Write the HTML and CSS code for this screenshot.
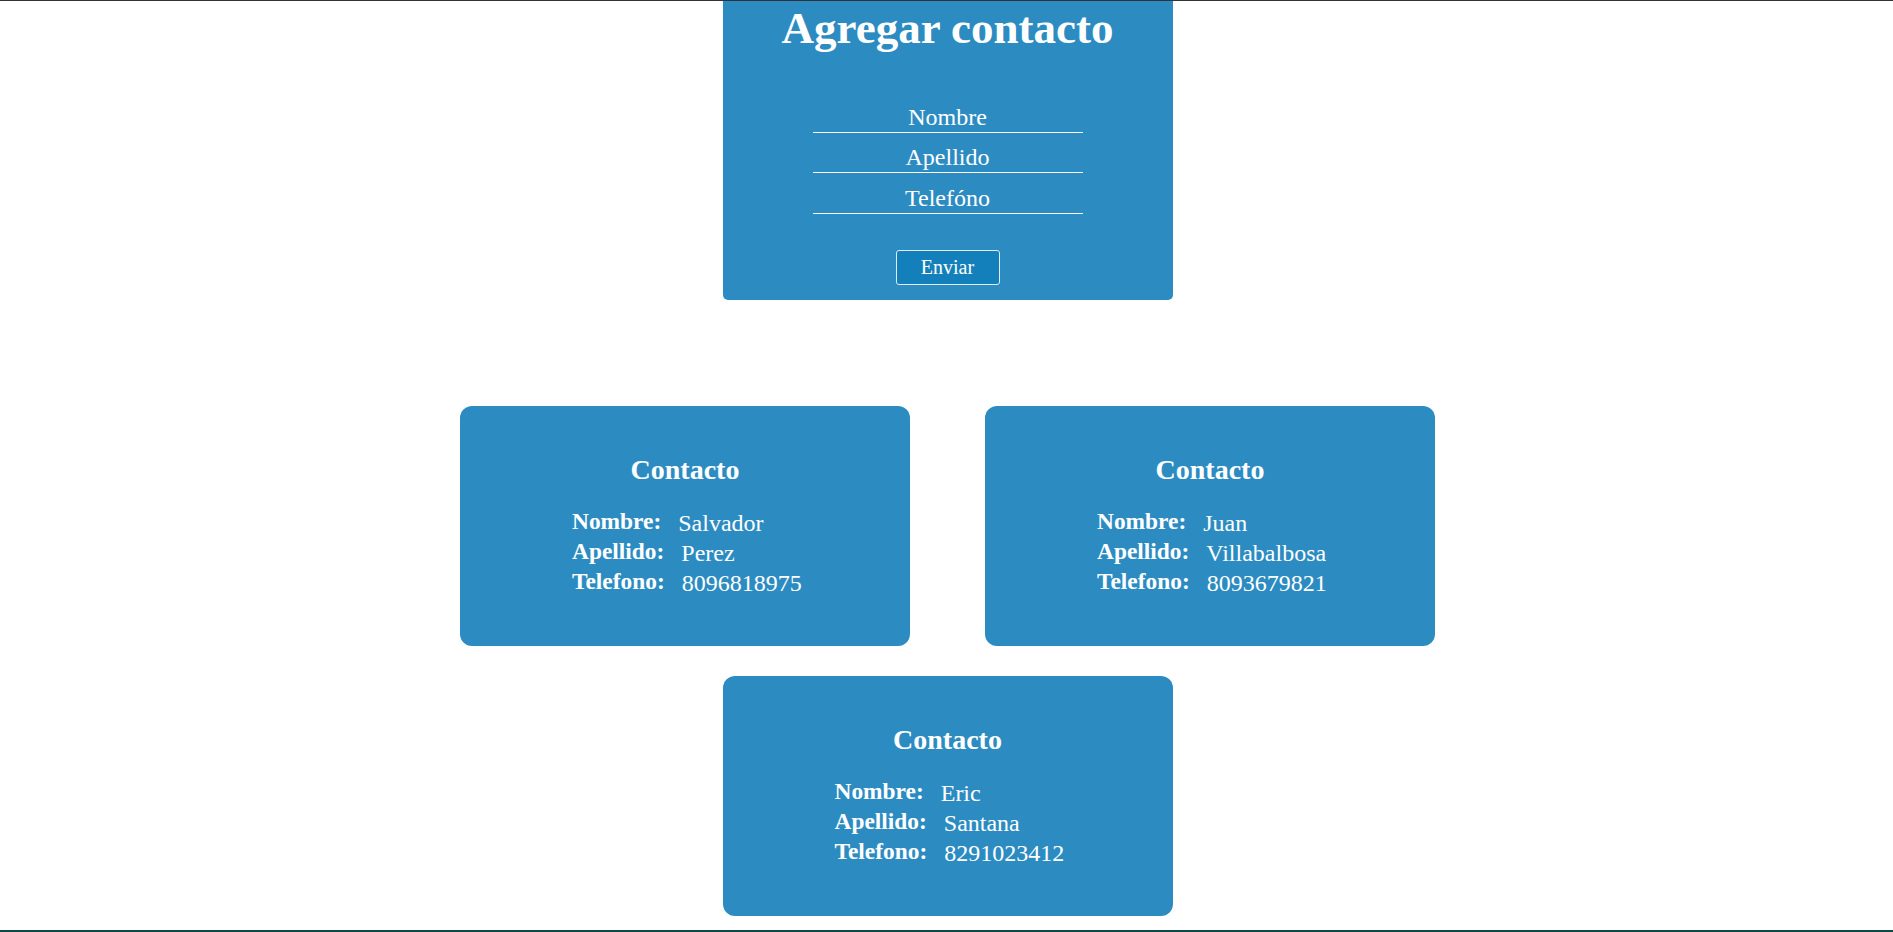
FILE: index.html
```html
<!DOCTYPE html>
<html lang="es">
<head>
<meta charset="utf-8">
<title>Agenda</title>
<link rel="stylesheet" href="styles.css">
</head>
<body>
<div class="page">
  <form class="add-card">
    <h1 class="add-title">Agregar contacto</h1>
    <div class="fields">
      <input class="field" type="text" placeholder="Nombre">
      <input class="field" type="text" placeholder="Apellido">
      <input class="field" type="text" placeholder="Telefóno">
    </div>
    <button class="send" type="button">Enviar</button>
  </form>

  <div class="contacts">
    <div class="contact">
      <h2 class="contact-title">Contacto</h2>
      <div class="row"><span class="label">Nombre:</span><span class="value">Salvador</span></div>
      <div class="row"><span class="label">Apellido:</span><span class="value">Perez</span></div>
      <div class="row"><span class="label">Telefono:</span><span class="value">8096818975</span></div>
    </div>
    <div class="contact">
      <h2 class="contact-title">Contacto</h2>
      <div class="row"><span class="label">Nombre:</span><span class="value">Juan</span></div>
      <div class="row"><span class="label">Apellido:</span><span class="value">Villabalbosa</span></div>
      <div class="row"><span class="label">Telefono:</span><span class="value">8093679821</span></div>
    </div>
    <div class="contact">
      <h2 class="contact-title">Contacto</h2>
      <div class="row"><span class="label">Nombre:</span><span class="value">Eric</span></div>
      <div class="row"><span class="label">Apellido:</span><span class="value">Santana</span></div>
      <div class="row"><span class="label">Telefono:</span><span class="value">8291023412</span></div>
    </div>
  </div>
</div>
</body>
</html>
```

FILE: styles.css
```css
html, body {
  margin: 0;
  padding: 0;
}

body {
  height: 100vh;
  box-sizing: border-box;
  border-top: 1px solid #2e323b;
  border-bottom: 2px solid #0b4848;
  overflow: hidden;
  background: #ffffff;
  font-family: "Liberation Serif", "Times New Roman", serif;
  color: #ffffff;
}

.page {
  padding-left: 2px;
  display: flex;
  flex-direction: column;
  align-items: center;
}

.add-card {
  width: 450px;
  height: 299px;
  box-sizing: border-box;
  background: #2c8cc2;
  border-radius: 0 0 5px 5px;
  padding-top: 1px;
  display: flex;
  flex-direction: column;
  align-items: center;
}

.add-title {
  margin: 0 0 39px;
  font-size: 45px;
  line-height: 52px;
  font-weight: bold;
  text-align: center;
}

.fields {
  display: flex;
  flex-direction: column;
}

.field {
  display: block;
  width: 270px;
  height: 40px;
  box-sizing: border-box;
  margin: 0;
  padding: 10px 0 0;
  border: none;
  border-bottom: 1px solid #ffffff;
  background: transparent;
  color: #ffffff;
  font-family: "Liberation Serif", "Times New Roman", serif;
  font-size: 24px;
  text-align: center;
  outline: none;
}

.field:nth-child(3) {
  height: 41px;
}

.field::placeholder {
  color: #ffffff;
  opacity: 1;
}

.send {
  margin-top: 36px;
  width: 104px;
  height: 35px;
  box-sizing: border-box;
  background: #1380bc;
  border: 1px solid #dfeef7;
  border-radius: 3px;
  color: #ffffff;
  font-family: "Liberation Serif", "Times New Roman", serif;
  font-size: 20px;
  padding: 0;
}

.contacts {
  margin-top: 106px;
  width: 975px;
  display: flex;
  flex-wrap: wrap;
  justify-content: center;
  column-gap: 75px;
  row-gap: 30px;
}

.contact {
  width: 450px;
  height: 240px;
  box-sizing: border-box;
  background: #2c8cc2;
  border-radius: 12px;
  padding: 48px 0 0 112px;
}

.contact-title {
  margin: 0 0 20px -112px;
  font-size: 28px;
  line-height: 32px;
  font-weight: bold;
  text-align: center;
}

.row {
  display: flex;
  align-items: flex-start;
  gap: 17px;
  height: 30px;
}

.label {
  font-weight: bold;
  font-size: 23.4px;
  line-height: 30px;
}

.value {
  font-size: 24px;
  line-height: 30px;
  padding-top: 2px;
}
```
